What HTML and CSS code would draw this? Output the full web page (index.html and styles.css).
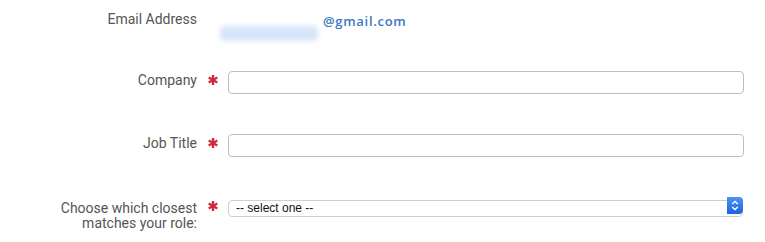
FILE: index.html
```html
<!DOCTYPE html>
<html lang="en">
<head>
<meta charset="utf-8">
<title>Profile form</title>
<link rel="stylesheet" href="styles.css">
</head>
<body>
<form class="form">
  <div class="row row-email">
    <div class="label">Email Address</div>
    <div class="star-cell"></div>
    <div class="value">
      <span class="blur-blob"></span>
      <span class="domain">@gmail.com</span>
    </div>
  </div>
  <div class="row row-text">
    <label class="label" for="company">Company</label>
    <div class="star-cell"><svg class="star" viewBox="0 0 10 10" width="10" height="10"><g stroke="#d3283c" stroke-width="2.4" stroke-linecap="butt"><line x1="5" y1="0" x2="5" y2="10"/><line x1="0.7" y1="2.5" x2="9.3" y2="7.5"/><line x1="0.7" y1="7.5" x2="9.3" y2="2.5"/></g></svg></div>
    <input class="text-input" id="company" type="text">
  </div>
  <div class="row row-text">
    <label class="label" for="job">Job Title</label>
    <div class="star-cell"><svg class="star" viewBox="0 0 10 10" width="10" height="10"><g stroke="#d3283c" stroke-width="2.4" stroke-linecap="butt"><line x1="5" y1="0" x2="5" y2="10"/><line x1="0.7" y1="2.5" x2="9.3" y2="7.5"/><line x1="0.7" y1="7.5" x2="9.3" y2="2.5"/></g></svg></div>
    <input class="text-input" id="job" type="text">
  </div>
  <div class="row row-select">
    <label class="label label-multi" for="role">Choose which closest matches your role:</label>
    <div class="star-cell"><svg class="star" viewBox="0 0 10 10" width="10" height="10"><g stroke="#d3283c" stroke-width="2.4" stroke-linecap="butt"><line x1="5" y1="0" x2="5" y2="10"/><line x1="0.7" y1="2.5" x2="9.3" y2="7.5"/><line x1="0.7" y1="7.5" x2="9.3" y2="2.5"/></g></svg></div>
    <div class="select-wrap">
      <select class="select" id="role">
        <option>-- select one --</option>
      </select>
      <span class="select-btn"><svg viewBox="0 0 16 17" width="16" height="17"><polyline points="5.2,7 8,4.4 10.8,7" fill="none" stroke="#fff" stroke-width="1.4"/><polyline points="5.2,10 8,12.6 10.8,10" fill="none" stroke="#fff" stroke-width="1.4"/></svg></span>
    </div>
  </div>
</form>
</body>
</html>
```
FILE: styles.css
```css
html, body {
  margin: 0;
  padding: 0;
  background: #ffffff;
}

body {
  font-family: Roboto, "Liberation Sans", Arial, sans-serif;
  color: #555555;
  width: 765px;
  height: 242px;
  overflow: hidden;
}

.form {
  display: block;
  padding-top: 11px;
}

.row {
  display: grid;
  grid-template-columns: 197px 31px 516px;
  align-items: start;
}

.label {
  box-sizing: border-box;
  padding-left: 58px;
  font-size: 14px;
  line-height: 16px;
  text-align: right;
  color: #555555;
  display: block;
}

.label-multi {
  line-height: 15px;
  margin-top: 4px;
}

.row-text .label {
  margin-top: 1px;
}

.star-cell {
  display: flex;
  justify-content: center;
}

.star {
  display: block;
  margin-left: 0;
}

.row-email {
  height: 33px;
}

.row-text {
  margin-top: 27px;
}

.row-text + .row-text {
  margin-top: 40px;
}

.row-text .star-cell {
  padding-top: 4px;
}

.row-select {
  margin-top: 40px;
}

.row-select .star-cell {
  padding-top: 4px;
}

.value {
  display: flex;
  align-items: flex-start;
  margin-left: -8px;
}

.blur-blob {
  display: block;
  width: 98px;
  height: 15px;
  margin-top: 15px;
  margin-right: 5px;
  background: #d6e5f9;
  border-radius: 5px;
  filter: blur(2.5px);
}

.domain {
  font-family: "Open Sans", "Liberation Sans", sans-serif;
  font-weight: 600;
  font-size: 13px;
  line-height: 16px;
  letter-spacing: 0.7px;
  color: #3a79c2;
  margin-top: 2px;
}

.text-input {
  box-sizing: border-box;
  width: 516px;
  height: 23px;
  margin: 0;
  padding: 0 6px;
  border: 1px solid #bdbdbd;
  border-radius: 4px;
  background: #ffffff;
  outline: none;
  font-family: inherit;
  font-size: 13px;
}

.select-wrap {
  position: relative;
  width: 515px;
  height: 17px;
}

.select {
  appearance: none;
  -webkit-appearance: none;
  box-sizing: border-box;
  width: 515px;
  height: 17px;
  margin: 0;
  padding: 0 0 0 7px;
  border: 1px solid #cfcfcf;
  border-radius: 4px;
  background: #ffffff;
  font-family: "Liberation Sans", Arial, sans-serif;
  font-size: 12px;
  line-height: 15px;
  color: #111111;
  outline: none;
}

.select-btn {
  position: absolute;
  top: 0;
  right: 0;
  width: 16px;
  height: 17px;
  border-radius: 0 4px 4px 0;
  background: linear-gradient(#4a93f6, #1f64dc);
  display: block;
}

.select-btn svg {
  display: block;
}
```
